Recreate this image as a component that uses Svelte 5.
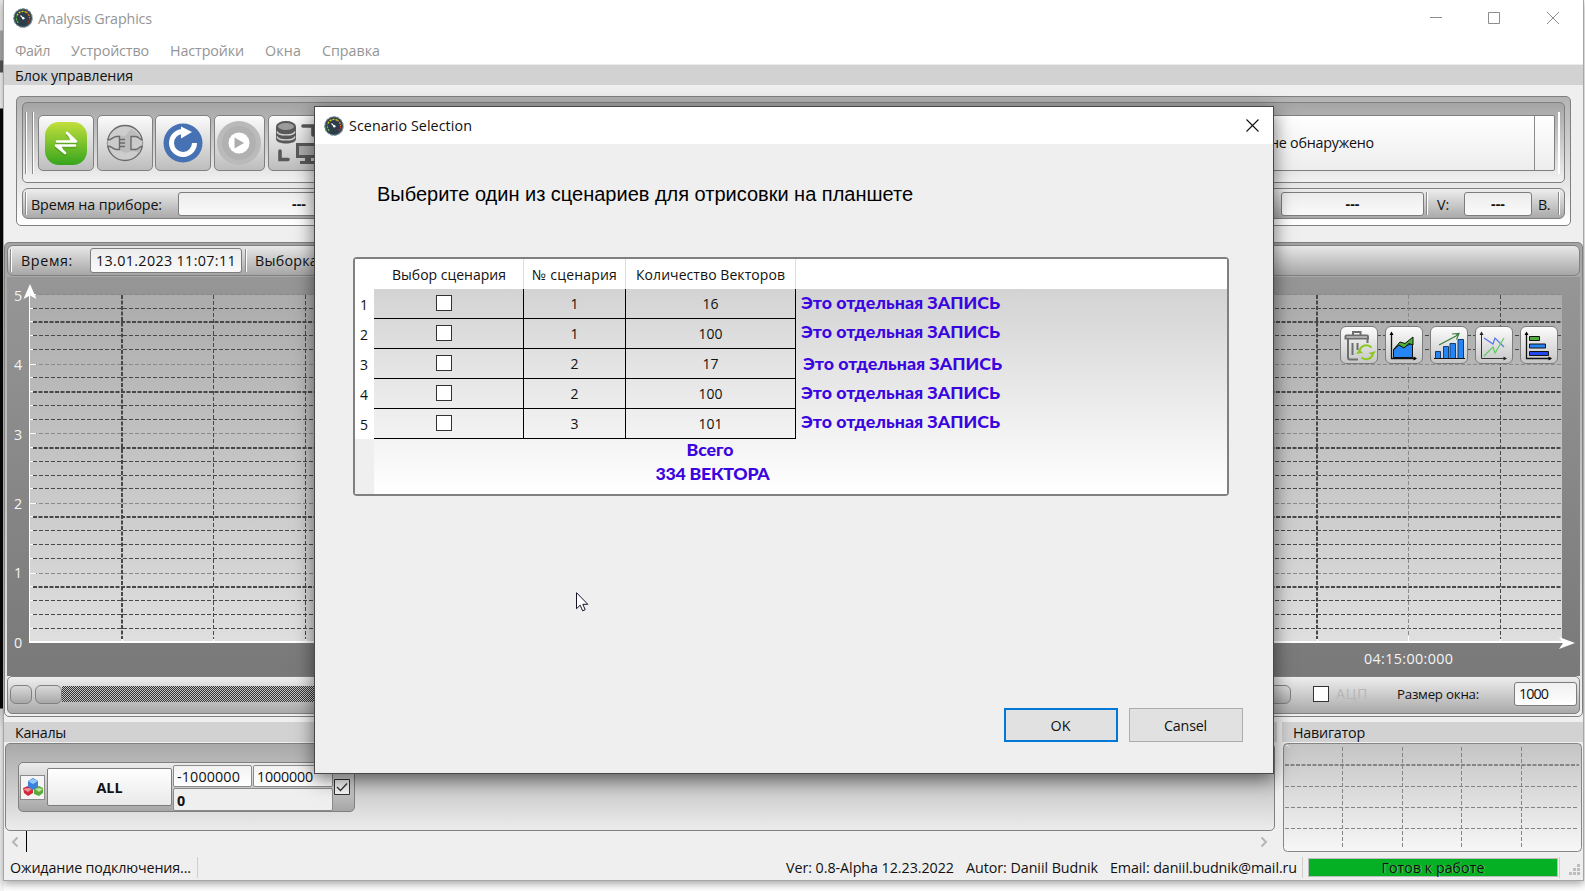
<script>
  // Spreads a label over its design width by adjusting the tracking.
  function fit(node, width) {
    const n = node.textContent.length;
    const range = document.createRange();
    range.selectNodeContents(node);
    const w = range.getBoundingClientRect().width;
    node.style.letterSpacing = `${(width - w) / n}px`;
  }

  const menu = [['Файл', 35], ['Устройство', 78], ['Настройки', 74], ['Окна', 36], ['Справка', 58]];
  const rows = [[1, '16'], [1, '100'], [2, '17'], [2, '100'], [3, '101']];
  const notes = [0, 0, 2, 0, 0];

  const light = [0, 5, 10, 15, 20];
  const heavy = [2, 7, 11, 16, 21];
  const hLines = Array.from({ length: 25 }, (_, i) => {
    const y = 17.1 + i * 13.92;
    const kind = light.includes(i) ? 'light' : heavy.includes(i) ? 'heavy' : 'thin';
    return { kind, y: kind === 'light' ? Math.round(y) : kind === 'heavy' ? Math.floor(y) + 1 : Math.floor(y) };
  });
  const vLines = [[115, 'heavy'], [206, 'thin'], [298, 'thin'], [1310, 'heavy'], [1401, 'light'], [1493, 'thin']];
  const yLabels = [5, 4, 3, 2, 1, 0];
</script>

{#snippet gauge()}
  <svg class="gauge" width="20" height="20" viewBox="0 0 20 20">
    <circle cx="10" cy="10" r="9.2" fill="#2d3e4a" stroke="#6f8994" stroke-width="1.2" stroke-dasharray="3 .8" />
    <g fill="none" stroke-width="1.3" stroke-dasharray="2 1">
      <path d="M5.3 14.7A6.6 6.6 0 0 1 3.5 8.5" stroke="#5bc236" />
      <path d="M4 7.5A6.6 6.6 0 0 1 13 4.1" stroke="#e6d21c" />
      <path d="M13 4.1A6.6 6.6 0 0 1 16.6 10" stroke="#f08a1d" />
      <path d="M16.6 10.5A6.6 6.6 0 0 1 14.7 14.7" stroke="#e2231a" />
    </g>
    <path d="M7.500 7.500l2.800 2.800" stroke="#fff" stroke-width="1.1" />
    <circle cx="10.3" cy="10.3" r="1.2" fill="#fff" />
  </svg>
{/snippet}

<div class="desktop">
  <div class="edge"></div>
  <main class="win">
    <header class="titlebar">
      {@render gauge()}
      <span class="t" use:fit={114}>Analysis Graphics</span>
      <svg class="sys" width="130" height="14" viewBox="0 0 130 14" fill="none" stroke="#8c8c8c">
        <path d="M0 5.5h12M58.5.5h11v11h-11zM117 0l12 12M129 0l-12 12" />
      </svg>
    </header>
    <nav class="menu">
      {#each menu as [name, w]}<span use:fit={w}>{name}</span>{/each}
    </nav>
    <div class="docktitle top"><span use:fit={118}>Блок управления</span></div>

    <section class="control">
      <div class="tools">
        <i class="grip a"></i><i class="grip b"></i>
        <button class="tool" aria-label="exchange">
          <svg width="44" height="44" viewBox="0 0 44 44">
            <defs><linearGradient id="gg" x2="0" y2="1"><stop stop-color="#c3df3c" /><stop offset="1" stop-color="#35a51d" /></linearGradient></defs>
            <rect x="1" y="1" width="42" height="43" rx="14" fill="url(#gg)" />
            <g transform="translate(0 1.5)" stroke="#3c8a18" opacity=".45" fill="none" stroke-width="3" stroke-linecap="round" stroke-linejoin="round"><path d="M13 20.500H32L23 12M31 24.500H12L21 32" /></g>
            <path d="M13 20.500H32L23 12M31 24.500H12L21 32" fill="none" stroke="#fff" stroke-width="2.600" stroke-linecap="round" stroke-linejoin="round" />
            <path d="M23 12l9 8.500h-5zM21 32l-9-7.500h5z" fill="#fff" />
          </svg>
        </button>
        <button class="tool" aria-label="plug">
          <svg width="44" height="44" viewBox="0 0 44 44" fill="none" stroke="#6b6b6b" stroke-width="1.4">
            <circle cx="22" cy="22" r="17.500" fill="#cdcdcd" />
            <path d="M28 8a17 17 0 0 1 8 24l-6-2-8 2-8-4V14l8 1z" fill="#bcbcbc" stroke="none" />
            <path d="M4.500 19c5 0 5-3.500 9-3.500h3v13h-3c-4 0-4-3.500-9-3.500" fill="#cbcbcb" />
            <path d="M16.500 18.500H22M16.500 25.500H22M16.500 22H22" />
            <path d="M39.500 19c-3 0-3-3.500-7-3.500h-4.500v13h4.500c4 0 4-3.500 7-3.500" fill="#cbcbcb" />
          </svg>
        </button>
        <button class="tool" aria-label="reload">
          <svg width="44" height="44" viewBox="0 0 44 44">
            <circle cx="22" cy="22" r="19.500" fill="#4672b4" />
            <path d="M33.500 22A11.500 11.500 0 1 1 21 10.500" fill="none" stroke="#fff" stroke-width="5" />
            <path d="M20 5.500l11 5.500-11 6.500z" fill="#fff" />
          </svg>
        </button>
        <button class="tool narrow" aria-label="play">
          <svg width="46" height="46" viewBox="0 0 46 46">
            <circle cx="23" cy="23" r="22" fill="#bababa" /><circle cx="23" cy="23" r="17" fill="#b1b1b1" />
            <circle cx="23" cy="23" r="10.500" fill="#fff" /><path d="M18.500 17.500L28 23l-9.500 5.500z" fill="#adadad" />
          </svg>
        </button>
        <button class="tool last" aria-label="database">
          <svg width="50" height="46" viewBox="0 0 50 46" fill="#595959">
            <path d="M3 7v12c0 6 20 6 20 0V7z" /><ellipse cx="13" cy="6.500" rx="9" ry="4.500" fill="#9b9b9b" stroke="#595959" stroke-width="2" />
            <path d="M4 11.500c1 4.500 17 4.500 18 0M4 16.500c1 4.500 17 4.500 18 0" stroke="#d5d5d5" stroke-width="1.300" fill="none" />
            <path d="M30 6h10v9M7 31v8.500h8" fill="none" stroke="#595959" stroke-width="3.600" stroke-linecap="round" />
            <path d="M23 23h24v15H38v3h4v3H27v-3h5v-3h-9z" /><path d="M26 26h18v9H26z" fill="#aaa" />
          </svg>
        </button>
        <div class="combo"><span use:fit={104}>не обнаружено</span><i></i></div>
        <i class="grip end"></i>
      </div>
      <div class="values">
        <i class="grip s"></i>
        <span class="lbl dev" use:fit={131}>Время на приборе:</span>
        <div class="field dev">---</div>
        <div class="field mid">---</div>
        <i class="grip s"></i>
        <span class="lbl v" use:fit={12}>V:</span>
        <div class="field volt">---</div>
        <span class="lbl u" use:fit={12}>В.</span>
        <i class="grip s z"></i>
      </div>
    </section>

    <section class="graph">
      <div class="timebar">
        <i class="grip s"></i>
        <span class="tl" use:fit={52}>Время:</span>
        <div class="field date"><span use:fit={140}>13.01.2023 11:07:11</span></div>
        <i class="grip s"></i>
        <span class="sel" use:fit={63}>Выборка</span>
      </div>
      <div class="plot">
        <svg width="1573" height="399" viewBox="0 0 1573 399">
          <defs><linearGradient id="pg" x2="0" y2="1"><stop stop-color="#acacac" /><stop offset="1" stop-color="#dfdfdf" /></linearGradient></defs>
          <rect x="23" y="18" width="1532" height="347" fill="url(#pg)" />
          {#each hLines as l}
            <line class={l.kind} x1="26" x2="1555" y1={l.y + (l.kind === 'heavy' ? 0 : 0.5)} y2={l.y + (l.kind === 'heavy' ? 0 : 0.5)} />
            <path d="M23 {l.y + (l.kind === 'heavy' ? -0.5 : 0.5)}h{l.kind === 'light' ? 6 : 3}" stroke="#fff" />
          {/each}
          {#each vLines as [x, kind]}
            <line class={kind} x1={x + (kind === 'heavy' ? 0 : 0.5)} x2={x + (kind === 'heavy' ? 0 : 0.5)} y1="18" y2="362" />
            <path d="M{x + 0.5} {kind === 'light' ? 359 : 362}V365" stroke="#fff" />
          {/each}
          <path d="M22.500 17v348" stroke="#fff" />
          <path d="M22 365h1535" stroke="#fff" stroke-width="2" />
          <path d="M23 7l6.500 15-6.500-3.500-6.500 3.500zM1568 366l-16-6 4 6-4 6z" fill="#fff" />
          {#each yLabels as n, i}<text x="7" y={24 + i * 69.3}>{n}</text>{/each}
          <text x="1357" y="387" textLength="89">04:15:00:000</text>
        </svg>
        <div class="charts">
          <button aria-label="clear">
            <svg width="34" height="34" viewBox="0 0 34 34" fill="none" stroke="#6e6e6e" stroke-width="2">
              <path d="M3.500 10.500V8.500q0-1 1-1H25q1 0 1 1v2zM11 7V4h7.500v3M6 11v18.500q0 2 2 2h8M25.500 11v4M10.500 15v12M15.500 15v7" />
              <path d="M17.500 23a7 7 0 0 1 12-3.500M31 25.500a7 7 0 0 1-11.500 4" stroke="#8cc820" stroke-width="2" />
              <path d="M14 26l3-4.500 4 3.500zM34 23l-3 4.500-4.500-2.500z" fill="#8cc820" stroke="none" />
            </svg>
          </button>
          <button aria-label="area">
            <svg width="34" height="34" viewBox="0 0 34 34">
              <path d="M6.500 29.500V22l5-5 5 2 9-4v14.500z" fill="#2585f4" stroke="#111" /><path d="M6.500 21.500l6.500-7.500 5 1.500 8-6.500v8l-4-1.500-5 4.500-5-3z" fill="#4caf39" stroke="#111" />
              <path d="M4.500 5v25.500H29" fill="none" stroke="#111" stroke-width="1.300" /><path d="M4.500 3.500l2 3.500h-4zM30 30.500l-3.500 2v-4z" />
            </svg>
          </button>
          <button aria-label="growth">
            <svg width="34" height="34" viewBox="0 0 34 34">
              <path d="M3.500 30.500v-7h5v7zM11.500 30.500v-12h5v12zM18 30.500v-15h5.500v15zM26 30.500v-19h5.500v19z" fill="#2585f4" stroke="#153c6d" /><path d="M2 30.500h31" stroke="#111" />
              <path d="M7 17l17-9 2-2m-6 0l7-.5-2.500 6" fill="none" stroke="#38803b" stroke-width="1.200" />
            </svg>
          </button>
          <button aria-label="lines">
            <svg width="34" height="34" viewBox="0 0 34 34" fill="none">
              <path d="M4.500 5v25.500H29" stroke="#333" /><path d="M4.500 3.500l2 3.500h-4zM30 30.500l-3.500 2v-4z" fill="#222" />
              <path d="M7 10l9 6 2-6 9 9" stroke="#5575ee" stroke-width="1.200" /><path d="M7 28l9-9 2 6 9-15" stroke="#5dcb60" stroke-width="1.200" />
            </svg>
          </button>
          <button aria-label="bars">
            <svg width="34" height="34" viewBox="0 0 34 34" stroke="#111">
              <path d="M4.500 5v25.500H29" fill="none" stroke-width="1.300" /><path d="M4.500 3.500l2 3.500h-4zM30 30.500l-3.500 2v-4z" stroke="none" />
              <path d="M7.500 8.500h10v4h-10z" fill="#4caf39" /><path d="M7.500 16h16v4h-16z" fill="#2585f4" /><path d="M7.500 23.500h19v4h-19z" fill="#2347ec" />
            </svg>
          </button>
        </div>
      </div>
      <div class="scroll">
        <b></b><div class="groove"><b></b><i></i></div><b class="r"></b>
        <i class="check"></i>
        <span class="adc" use:fit={32}>АЦП</span>
        <span class="size" use:fit={82}>Размер окна:</span>
        <div class="field n"><span use:fit={29}>1000</span></div>
      </div>
    </section>

    <div class="bottom">
      <section class="channels">
        <div class="docktitle"><span use:fit={51}>Каналы</span></div>
        <div class="chframe">
          <div class="channel">
            <div class="rgb">
              <svg width="22" height="22" viewBox="0 0 22 22">
                <path d="M1 12l5-2 5 2v5l-5 3-4-3z" fill="#d5283b" /><path d="M12 12l5-2 4 2v5l-4 3-5-2z" fill="#5dab3b" />
                <path d="M6 5l5-3 5 3v6l-5 3-5-3z" fill="#3a82dc" /><path d="M6 5l5-2 5 2-5 3z" fill="#9ac9f6" /><path d="M1 13l5-1 4 1-4 3z" fill="#f3919a" /><path d="M13 13l4-1 4 1-4 3z" fill="#b8e49b" />
              </svg>
            </div>
            <div class="all">ALL</div>
            <div class="nums">
              <div class="box"><span use:fit={63}>-1000000</span></div>
              <div class="box"><span use:fit={56}>1000000</span></div>
              <div class="box wide">0</div>
            </div>
            <svg class="chk" width="16" height="16" viewBox="0 0 16 16"><path d="M.5.5h15v15H.5z" fill="#f4f4f4" stroke="#333" /><path d="M3 8l3.500 3.500L13 4.500" fill="none" stroke="#333" stroke-width="1.300" /></svg>
          </div>
        </div>
        <div class="hscroll">
          <svg width="8" height="12" viewBox="0 0 8 12"><path d="M6.500 1.500L2 6l4.500 4.500" /></svg><i></i>
          <svg width="8" height="12" viewBox="0 0 8 12"><path d="M1.500 1.500L6 6l-4.500 4.500" /></svg>
        </div>
      </section>
      <section class="navigator">
        <div class="docktitle"><span use:fit={72}>Навигатор</span></div>
        <svg class="nav" width="299" height="109" viewBox="0 0 299 109">
          <defs><linearGradient id="ng" x2="0" y2="1"><stop stop-color="#c4c4c4" /><stop offset="1" stop-color="#f7f7f7" /></linearGradient></defs>
          <rect x=".5" y=".5" width="298" height="108" rx="4" fill="url(#ng)" stroke="#858585" />
          <path d="M59.500 4v102M119.500 4v102M178.500 4v102M238.500 4v102M2 43.500h294M2 64.500h294M2 85.500h294" stroke="#858585" stroke-dasharray="4 2" />
          <path d="M2 22h294" stroke="#858585" stroke-width="2" stroke-dasharray="4 1.500" /><path d="M2 2l6 3-4-3z" fill="#fff" />
        </svg>
      </section>
    </div>

    <footer class="status">
      <span class="wait"><b use:fit={181}>Ожидание подключения...</b></span><i></i>
      <span class="ver"><b use:fit={168}>Ver: 0.8-Alpha 12.23.2022</b></span>
      <span class="aut"><b use:fit={132}>Autor: Daniil Budnik</b></span>
      <span class="em"><b use:fit={187}>Email: daniil.budnik@mail.ru</b></span><i></i>
      <div class="ready"><span use:fit={103}>Готов к работе</span></div><i></i>
      <svg width="12" height="12" viewBox="0 0 12 12" fill="#bdbdbd"><path d="M9 0h3v3H9zM9 4h3v3H9zM9 8h3v3H9zM5 4h3v3H5zM5 8h3v3H5zM1 8h3v3H1z" /></svg>
    </footer>
  </main>

  <div class="dialog">
    <header>
      {@render gauge()}
      <span use:fit={123}>Scenario Selection</span>
      <svg class="x" width="13" height="13" viewBox="0 0 13 13"><path d="M.5.5l12 12M12.500.5l-12 12" stroke="#111" stroke-width="1.100" /></svg>
    </header>
    <p><span use:fit={536}>Выберите один из сценариев для отрисовки на планшете</span></p>
    <div class="table">
      <div class="head"><i></i><span><b use:fit={114}>Выбор сценария</b></span><span><b use:fit={85}>№ сценария</b></span><span><b use:fit={149}>Количество Векторов</b></span></div>
      <div class="body">
        {#each rows as [id, count], i}
          <div class="row">
            <em>{i + 1}</em><span class="c1"><i class="check"></i></span><span class="c2">{id}</span><span class="c3"><b use:fit={count.length * 8}>{count}</b></span>
          </div>
        {/each}
        <div class="rest"></div>
      </div>
      <div class="notes">
        {#each notes as dx, i}<span class="note n{i}" class:shift={dx > 0}><b use:fit={199}>Это отдельная ЗАПИСЬ</b></span>{/each}
      </div>
      <div class="total"><b use:fit={47}>Всего</b><b class="sum" use:fit={114}>334 ВЕКТОРА</b></div>
    </div>
    <div class="actions"><button class="ok">OK</button><button><span use:fit={43}>Cansel</span></button></div>
  </div>

  <svg class="cursor" width="13" height="20" viewBox="0 0 13 20"><path d="M.5.7v16l3.700-3.500 2.500 5.600 2.500-1.100-2.400-5.400h5z" fill="#fff" stroke="#15152a" /></svg>
</div>

<style>
  :global(body) { margin: 0; overflow: hidden; background: #fff; }
  .desktop, .desktop * { box-sizing: border-box; }
  .desktop { position: relative; width: 1585px; height: 891px; overflow: hidden; font: 14.3px/20px "Open Sans", "Noto Sans", sans-serif; color: #111; background: #fff; white-space: nowrap; }
  span, b { white-space: pre; }
  i, em { display: block; flex: none; font-style: normal; }
  svg { display: block; flex: none; }
  button { font: inherit; color: inherit; padding: 0; margin: 0; }
  .edge { position: absolute; inset: 0 auto 0 0; width: 4px; height: 891px; background: linear-gradient(#e9e9e9 0 30px, #aaa 31px 60px, #555 61px 72px, #f4f4f4 73px 108px, #080808 109px 708px, #d8d8d8 709px, #f4f4f4 730px); }
  .win { position: absolute; left: 3px; top: 0; width: 1581px; height: 881px; border: 1px solid #a6a6a6; border-top: 0; background: #efefef; display: flex; flex-direction: column; box-shadow: 0 3px 8px rgba(0,0,0,.35); }
  .titlebar { height: 36px; flex: none; background: #fff; display: flex; align-items: center; padding-left: 9px; color: #959595; }
  .titlebar .t { margin-left: 5px; margin-top: 2px; }
  .sys { margin: 2px 23px 0 auto; }
  .menu { height: 29px; flex: none; background: #fff; border-bottom: 1px solid #ececec; display: flex; gap: 21px; padding: 5px 0 0 11px; color: #959595; }
  .docktitle { height: 20px; flex: none; background: #d2d2d2; padding-left: 11px; line-height: 22px; }
  .control { flex: none; margin: 11px 12px 0; width: 1555px; height: 130px; border: 1px solid #808080; border-radius: 5px; padding: 5px; background: linear-gradient(#b3b3b3, #fff); display: flex; flex-direction: column; gap: 5px; }
  .tools { height: 81px; border: 1px solid #808080; border-radius: 5px; background: linear-gradient(#a4a4a4, #f2f2f2); display: flex; align-items: center; padding-left: 2px; }
  .grip { width: 2px; height: 62px; border-left: 1px solid #8b8b8b; border-right: 1px solid #fff; }
  .grip.b { margin: 0 4px 0 5px; }
  .tool { flex: none; width: 56px; height: 56px; margin-right: 2.500px; border: 1px solid #808080; border-radius: 5px; background: linear-gradient(#fbfbfb, #bdbdbd); display: grid; place-items: center; }
  .tool.narrow { width: 51px; margin-right: 3px; }
  .tool.last { width: 60px; justify-items: start; padding-left: 4px; overflow: hidden; }
  .combo { margin-left: auto; width: 320px; height: 56px; border: 1px solid #808080; border-radius: 2px; background: linear-gradient(#fff, #ededed); display: flex; align-items: center; justify-content: space-between; padding-left: 34px; }
  .combo span { margin-top: 1px; }
  .combo i { width: 20px; height: 54px; border-left: 1px solid #8b8b8b; }
  .grip.end { margin: 0 4px 0 3px; border-left-color: #fff; }
  .values { height: 31px; border: 1px solid #808080; border-radius: 6px; background: linear-gradient(#eee, #a9a9a9); display: flex; align-items: center; padding-left: 2px; }
  .grip.s { height: 23px; }
  .lbl { height: 18px; }
  .lbl.dev { width: 132px; margin-left: 4px; }
  .field { flex: none; height: 24px; border: 1px solid #7d7d7d; border-radius: 3px; background: linear-gradient(#ececec, #fafafa); display: flex; align-items: center; justify-content: center; font-weight: 700; }
  .field.dev { width: 242px; margin-left: 15px; }
  .field.mid { width: 143px; margin: 0 2px 0 auto; }
  .lbl.v { margin-left: 9px; width: 12px; }
  .field.volt { width: 68px; margin: 0 6px 0 15px; }
  .grip.z { margin: 0 4px 0 8px; }
  .lbl.u { width: 12px; }
  .graph { flex: none; margin-top: 16px; height: 475px; border: 1px solid #808080; border-radius: 5px; background: linear-gradient(#a4a4a4, #c9c9c9 60%, #f0f0f0); padding: 2px; display: flex; flex-direction: column; }
  .timebar { flex: none; height: 31px; border: 1px solid #808080; border-radius: 6px; background: linear-gradient(#e8e8e8, #a6a6a6); display: flex; align-items: center; padding-left: 2px; }
  .tl { margin-left: 9px; width: 52px; }
  .tl, .sel { margin-top: 1px; }
  .date { width: 152px; height: 25px; margin: 0 3px 0 17px; font-weight: 400; }
  .sel { margin-left: 8px; }
  .plot { position: relative; flex: none; height: 399px; margin-top: 1px; background: linear-gradient(#969696, #797979); }
  line { stroke: #484848; stroke-width: 1; stroke-dasharray: 4 2; }
  line.light { stroke: #8a8a8a; }
  line.heavy { stroke-width: 2; stroke-dasharray: 4 1.5; }
  text { font: 14.3px "Open Sans", sans-serif; fill: #f4f4f4; }
  .charts { position: absolute; left: 1333px; top: 49px; display: flex; gap: 7px; }
  .charts button { width: 38px; height: 38px; border: 1px solid #7c7c7c; border-radius: 6px; background: linear-gradient(#fcfcfc, #c6c6c6); display: grid; place-items: center; }
  .scroll { flex: none; height: 38px; border: 1px solid #808080; border-radius: 5px; background: linear-gradient(#eee, #a9a9a9); display: flex; align-items: center; padding: 0 0 2px 2px; }
  .scroll b { width: 22px; height: 19px; flex: none; border: 1px solid #808080; border-radius: 6px; background: linear-gradient(#d9d9d9, #a8a8a8); }
  .groove { width: 1231px; height: 18px; margin-left: 3px; display: flex; align-items: center; }
  .groove b { width: 27px; }
  .groove i { flex: 1; height: 16px; background: repeating-conic-gradient(#333 0 25%, #c4c4c4 0 50%) 0 0 / 2px 2px; }
  .scroll b.r { margin-left: 3px; width: 22px; }
  .check { width: 16px; height: 16px; border: 1px solid #333; background: #fff; }
  .scroll .check { margin-left: 22px; }
  .adc { margin-left: 7px; width: 33px; color: #b6b6b6; }
  .size { margin-left: 28px; width: 83px; font-size: 13.3px; }
  .field.n { width: 63px; margin: 0 2px 0 auto; justify-content: flex-start; padding-left: 4px; font-weight: 400; background: linear-gradient(#f0f0f0, #fff); }
  .bottom { flex: none; margin-top: 5px; height: 132px; display: flex; justify-content: space-between; }
  .channels { width: 1273px; }
  .navigator { width: 301px; }
  .nav { margin: 1px 0 0 1px; }
  .chframe { margin: 1px 1px 0; width: 1270px; height: 88px; border: 1px solid #808080; border-radius: 5px; background: linear-gradient(#a9a9a9, #ececec); padding: 18px 12px; }
  .channel { width: 337px; height: 50px; border: 1px solid #808080; border-radius: 5px; background: linear-gradient(#ececec, #a6a6a6); display: flex; align-items: center; padding-left: 1px; }
  .rgb { width: 25px; height: 25px; border: 1px solid #8b8b8b; background: #f5f5f5; display: grid; place-items: center; }
  .all { width: 125px; height: 38px; margin: 0 1px 0 2px; border: 1px solid #7d7d7d; border-radius: 2px; background: linear-gradient(#fff, #e9e9e9); display: grid; place-items: center; font-weight: 700; padding-top: 1px; }
  .nums { display: grid; grid-template-columns: 79px 80px; gap: 1px; width: 160px; margin-top: 1px; }
  .box { height: 22px; border: 1px solid #8b8b8b; border-radius: 2px; background: linear-gradient(#f2f2f2, #fff); padding-left: 3px; line-height: 21px; }
  .box.wide { grid-column: span 2; height: 23px; line-height: 23px; font-weight: 700; background: #efefef; }
  .chk { margin: -1px 0 0 1px; }
  .hscroll { display: flex; align-items: center; height: 21px; padding: 0 9px 0 7px; }
  .hscroll i { width: 1px; height: 21px; background: #000; margin: 0 auto 0 7px; }
  .hscroll path { fill: none; stroke: #b6b6b6; stroke-width: 2; }
  .status { flex: none; height: 26px; display: flex; align-items: center; padding-left: 6px; }
  .status > i { width: 1px; height: 21px; background: #cfcfcf; }
  .status > span { height: 20px; line-height: 22px; }
  .status b { font-weight: 400; }
  .wait { width: 187px; }
  .ver { width: 180px; margin-left: 588px; }
  .aut { width: 144px; }
  .em { width: 192px; }
  .ready { width: 250px; height: 19px; margin: 0 1px 0 5px; background: #06b025; border: 1px solid #bcbcbc; text-align: center; line-height: 18px; text-shadow: 1px 0 0 rgba(255,255,255,.35); }
  .status svg { margin: 6px 0 0 8px; }

  .dialog { position: absolute; left: 314px; top: 106px; width: 960px; height: 668px; border: 1px solid #484848; background: #efefef; box-shadow: 0 5px 18px rgba(0,0,0,.55); display: flex; flex-direction: column; }
  .dialog header { height: 37px; flex: none; background: #fff; display: flex; align-items: center; padding-left: 9px; }
  .dialog header span { margin-left: 5px; }
  .dialog .x { margin: 0 14px 0 auto; }
  .dialog p { margin: 36px 0 0 62px; height: 28px; font: 20px/28px "Liberation Sans", sans-serif; color: #000; }
  .table { position: relative; flex: none; margin: 49px 0 0 38px; width: 876px; height: 239px; border: 2px solid #808080; border-radius: 4px; display: flex; flex-direction: column; font-size: 14px; }
  .head { height: 30px; flex: none; background: #fff; display: flex; }
  .head i { width: 20px; }
  .head b, .row b { font-weight: 400; }
  .head span { border-right: 1px solid #dcdcdc; text-align: center; line-height: 31px; height: 30px; }
  .head span:nth-of-type(1), .c1 { width: 149px; }
  .head span:nth-of-type(2), .c2 { width: 102px; }
  .head span:nth-of-type(3), .c3 { width: 170px; }
  .body { flex: 1; background: linear-gradient(#d3d3d3, #fff); display: flex; flex-direction: column; }
  .row { height: 30px; flex: none; display: flex; line-height: 29px; text-align: center; }
  .row em { width: 19px; background: #fff; padding-right: 1px; line-height: 31px; }
  .row span { border-right: 1px solid #000; border-bottom: 1px solid #000; height: 30px; }
  .row .c1 { width: 150px; padding: 6px 0 0 62px; }
  .rest { flex: 1; width: 19px; background: #efefef; }
  .notes, .total { position: absolute; color: #3b05e0; font: 700 17.8px/24px Lato, "Open Sans", sans-serif; }
  .notes { left: 446px; top: 31px; }
  .note { display: block; height: 29px; }
  .n1 { height: 32px; }
  .shift { padding-left: 2px; }
  .total { left: 284px; top: 178px; width: 142px; display: flex; flex-direction: column; align-items: center; }
  .total .sum { margin-left: 5px; }
  .actions { display: flex; gap: 11px; margin: 212px 0 0 689px; }
  .actions button { width: 114px; height: 34px; border: 1px solid #adadad; background: #e1e1e1; border-radius: 0; padding: 1px 1px 0 0; }
  .actions .ok { border: 2px solid #0078d7; }
  .cursor { position: absolute; left: 576px; top: 592px; }
</style>
